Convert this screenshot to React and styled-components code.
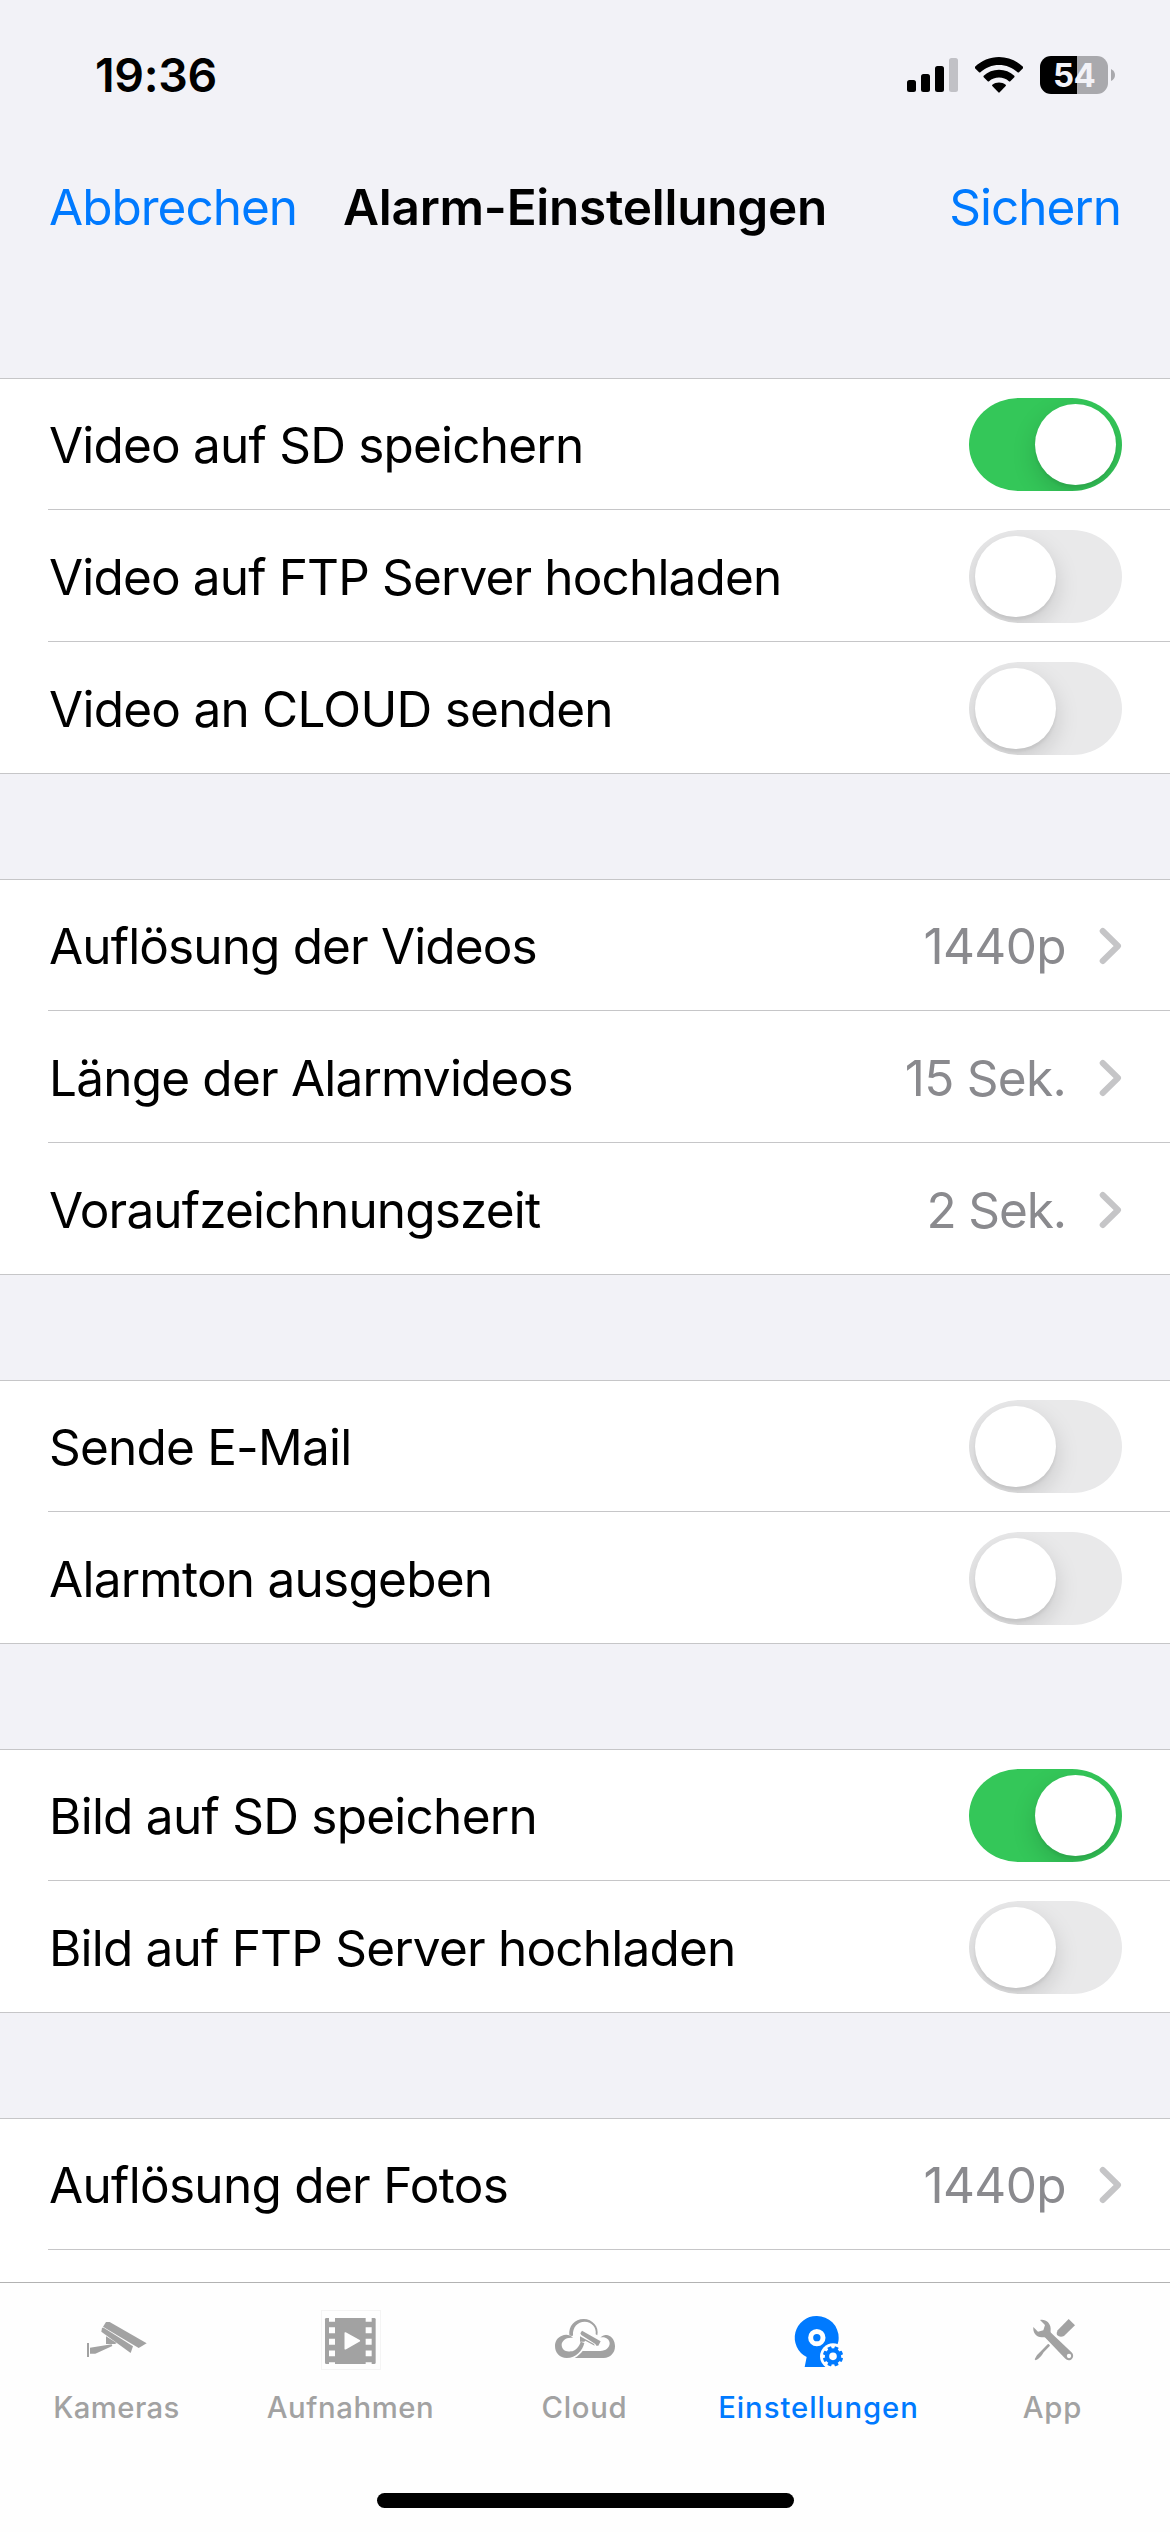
import React from "react";
import styled, { createGlobalStyle } from "styled-components";

const GlobalStyle = createGlobalStyle`
	* {
		box-sizing: border-box;
	}

	body {
		margin: 0;
		background: #f2f2f7;
		font-family: Inter, "Liberation Sans", sans-serif;
		color: #000;
	}
`;

const Screen = styled.div`
	width: 1170px;
	height: 2532px;
	display: flex;
	flex-direction: column;
	overflow: hidden;
	background: #f2f2f7;
`;

// Status bar
const StatusBar = styled.div`
	height: 141px;
	padding: 8px 55px 0 95px;
	display: flex;
	align-items: center;
	justify-content: space-between;
	flex-shrink: 0;
`;

const Clock = styled.div`
	font-size: 46.5px;
	font-weight: 600;
	line-height: 56px;
	letter-spacing: -0.3px;
`;

const StatusIcons = styled.div`
	display: flex;
	align-items: center;
	gap: 17px;
`;

const Battery = styled.div`
	display: flex;
	align-items: center;
	gap: 3px;
`;

const BatteryBody = styled.div`
	width: 68px;
	height: 38px;
	border-radius: 11px;
	background: linear-gradient(to right, #000 37px, #a9a9ad 37px);
	color: #f2f2f7;
	font-size: 33px;
	font-weight: 700;
	line-height: 38px;
	letter-spacing: -0.6px;
	text-align: center;
`;

// Navigation bar
const NavBar = styled.div`
	height: 132px;
	padding: 0 49px;
	display: flex;
	align-items: center;
	flex-shrink: 0;
`;

const NavButton = styled.div`
	width: ${(props) => props.$width}px;
	text-align: ${(props) => props.$align};
	color: #007aff;
	font-size: 49.5px;
	line-height: 60px;
	letter-spacing: -1px;
	white-space: nowrap;
`;

const NavTitle = styled.div`
	flex: 1;
	font-size: 49.5px;
	font-weight: 600;
	line-height: 60px;
	letter-spacing: -0.25px;
	white-space: nowrap;
`;

// Settings list
const List = styled.div`
	flex: 1;
	min-height: 0;
	overflow: hidden;
	padding-top: 105px;
	display: flex;
	flex-direction: column;
	gap: 105px;
`;

const Group = styled.div`
	flex-shrink: 0;
	background: #fff;
	border-top: 1px solid #c6c6c8;
	border-bottom: 1px solid #c6c6c8;
`;

const Row = styled.div`
	height: 132px;
	margin-left: 48px;
	padding: 2px 48px 0 1px;
	display: flex;
	align-items: center;
	border-bottom: 1px solid #c6c6c8;

	&:first-child {
		height: 131px;
		padding-top: 1px;
	}

	&:last-child {
		height: 131px;
		border-bottom: 0;
	}
`;

const Label = styled.div`
	flex: 1;
	font-size: 49.5px;
	line-height: 60px;
	letter-spacing: ${(props) => props.$track}px;
	white-space: nowrap;
`;

const Value = styled.div`
	margin-right: 32px;
	color: #8a8a8e;
	font-size: 49.5px;
	line-height: 60px;
	letter-spacing: ${(props) => props.$track}px;
	white-space: nowrap;
`;

const Track = styled.div`
	width: 153px;
	height: 93px;
	padding: 6px;
	border-radius: 50px / 46.5px;
	display: flex;
	justify-content: ${(props) => (props.$on ? "flex-end" : "flex-start")};
	background: ${(props) => (props.$on ? "#34c759" : "#e9e9ea")};
	overflow: hidden;
`;

const Knob = styled.div`
	width: 81px;
	height: 81px;
	border-radius: 50%;
	background: #fff;
	box-shadow: 0 9px 24px rgba(0, 0, 0, 0.15), 0 3px 3px rgba(0, 0, 0, 0.06);
`;

// Tab bar
const TabBar = styled.div`
	height: 250px;
	display: flex;
	flex-direction: column;
	align-items: center;
	flex-shrink: 0;
	background: #fefefe;
	border-top: 1px solid #b2b2b2;
`;

const Tabs = styled.div`
	width: 100%;
	height: 210px;
	display: grid;
	grid-template-columns: repeat(5, 1fr);
`;

const Tab = styled.div`
	padding: 27px 1px 0 0;
	display: flex;
	flex-direction: column;
	align-items: center;
	color: ${(props) => (props.$active ? "#007aff" : "#a2a2a2")};
`;

const TabLabel = styled.div`
	margin-top: 20px;
	font-size: 29.3px;
	font-weight: 500;
	line-height: 36px;
	letter-spacing: ${(props) => props.$track}px;
	white-space: nowrap;
`;

const HomeIndicator = styled.div`
	width: 417px;
	height: 15px;
	border-radius: 8px;
	background: #000;
`;

function SignalIcon() {
	return (
		<svg width="51" height="34" viewBox="0 0 51 34">
			<rect x="0" y="22" width="9" height="12" rx="2.5" />
			<rect x="14" y="16" width="9" height="18" rx="2.5" />
			<rect x="28" y="8" width="9" height="26" rx="2.5" />
			<rect x="42" y="0" width="9" height="34" rx="2.5" fill="#c1c1c6" />
		</svg>
	);
}

function WifiIcon() {
	return (
		<svg width="48" height="36" viewBox="0 0 48 36">
			<path d="M24 0C33 0 41.600 3.600 48 9.800Q48.600 10.500 48 11.200L44 15.300Q43.300 15.900 42.600 15.300C37.600 10.500 31 7.900 24 7.900S10.400 10.500 5.400 15.300Q4.700 15.900 4 15.300L0 11.200Q-.6 10.500 0 9.800C6.400 3.600 15 0 24 0Z" />
			<path d="M24 12.800C29.800 12.800 35.200 15 39.300 18.800Q39.900 19.500 39.300 20.200L35.300 24.200Q34.600 24.800 33.900 24.200C31.200 21.800 27.700 20.500 24 20.500S16.800 21.800 14.100 24.200Q13.400 24.800 12.700 24.200L8.700 20.200Q8.100 19.500 8.700 18.800C12.800 15 18.200 12.800 24 12.800Z" />
			<path d="M24 25.400C26.500 25.400 28.800 26.200 30.700 27.700Q31.300 28.400 30.700 29.100L24.700 35.300Q24 36 23.300 35.300L17.300 29.100Q16.700 28.400 17.300 27.700C19.200 26.200 21.500 25.400 24 25.400Z" />
		</svg>
	);
}

function BatteryTip() {
	return (
		<svg width="4" height="12" viewBox="0 0 4 12">
			<path d="M0 0Q4 2 4 6T0 12Z" fill="#a9a9ad" />
		</svg>
	);
}

function Chevron() {
	return (
		<svg width="24" height="38" viewBox="0 0 24 38">
			<path
				d="M4.700 4L20 19L4.700 34"
				fill="none"
				stroke="#c5c5c7"
				strokeWidth="6"
				strokeLinecap="round"
				strokeLinejoin="round"
			/>
		</svg>
	);
}

function CameraIcon() {
	return (
		<svg width="60" height="60" viewBox="78 30 180 180" fill="currentColor">
			<path d="M78 129h6v42h-6z" />
			<path d="M87 143L152 133L154 138L103 161H87z" />
			<path d="M135 109L167 129L162 132H135z" />
			<path d="M121 95L123 83H128L216 139L209 159z" />
			<path d="M126 80L135 66H146L257 130L233 144z" />
		</svg>
	);
}

function FilmIcon() {
	const holes = [82, 116.5, 151.5];
	return (
		<svg width="60" height="60" viewBox="60 30 180 180" fill="currentColor">
			<rect x="61.500" y="31.500" width="177" height="177" fill="none" stroke="#f4f4f4" strokeWidth="3" />
			<rect x="72" y="54" width="152" height="138" rx="4" />
			<g fill="#fefefe">
				<path d="M84 53h18v12h-18zM194 53h18v12h-18zM84 187h18v6h-18zM194 187h18v6h-18z" />
				{holes.map((y) => (
					<path key={y} d={`M84 ${y}h18v17.500h-18zM194 ${y}h18v17.500h-18z`} />
				))}
				<path
					d="M133 99V146L175 122.500z"
					stroke="#fefefe"
					strokeWidth="5"
					strokeLinejoin="round"
				/>
			</g>
		</svg>
	);
}

function CloudIcon() {
	return (
		<svg width="60" height="60" viewBox="72 30 180 180" fill="currentColor">
			<path d="M115 106C112 78 131 57 158 57C184 57 205 80 199 106L194 103C197 82 182 65 161 65C140 65 124 82 126 106C125 110 120 108 115 106z" />
			<path d="M126 114C117 103 103 103 93 107C79 112 72 124 72 138C72 158 86 174 107 174C135 174 155 151 160 129L149 125C145 139 134 154 119 154C103 157 93 148 92 136C91 122 108 110 126 114z" />
			<path d="M131 174C141 168 150 160 155 153H208C224 153 236 143 236 130C236 118 222 109 208 113C215 105 223 103 231 106C244 110 252 124 252 139C252 159 238 174 218 174z" />
			<path d="M148 100L153 92L209 124L202 137L196 137L193 132L151 105z" />
			<path d="M147 109L189 132L191 137L163 122L160 125H147z" />
		</svg>
	);
}

function SettingsIcon() {
	const teeth = [22.5, 67.5, 112.5, 157.5, 202.5, 247.5, 292.5, 337.5];
	return (
		<svg width="60" height="60" viewBox="54 30 180 180" fill="currentColor">
			<path d="M138 48A65 65 0 0 1 203 113C203 121 202 127 199 134L163 201H101L107 171A65 65 0 0 1 138 48z" />
			<circle cx="137.500" cy="113" r="18.500" fill="none" stroke="#fefefe" strokeWidth="15" />
			<circle cx="186" cy="169" r="39" fill="#fefefe" />
			<circle cx="186" cy="169" r="18" fill="none" stroke="currentColor" strokeWidth="13" />
			{teeth.map((angle) => (
				<rect
					key={angle}
					x="180"
					y="138.500"
					width="12"
					height="9"
					rx="2"
					transform={`rotate(${angle} 186 169)`}
				/>
			))}
		</svg>
	);
}

function ToolsIcon() {
	return (
		<svg width="60" height="60" viewBox="66 30 180 180" fill="currentColor">
			<path d="M203 57L222 76L189 108Q177 114 168 105Q166 98 170 91z" />
			<path d="M144 133L147 137L128 157Q119 174 104 181L101 178Q107 163 121 152L140 133Q142 131 144 133z" />
			<path d="M117 60C133 56 149 69 149 86C149 92 148 95 150 98L213 158C221 168 214 181 203 181C198 181 194 177 191 174L133 113C130 111 126 112 122 112C106 112 95 98 97 81L111 95L127 91L132 75z" />
			<circle cx="204" cy="168" r="6.500" fill="#fefefe" />
		</svg>
	);
}

function Switch({ on }) {
	return (
		<Track $on={on}>
			<Knob />
		</Track>
	);
}

const groups = [
	[
		{ label: "Video auf SD speichern", track: -0.8, on: true },
		{ label: "Video auf FTP Server hochladen", track: -0.85, on: false },
		{ label: "Video an CLOUD senden", track: -0.75, on: false }
	],
	[
		{ label: "Auflösung der Videos", track: -0.87, value: "1440p", valueTrack: -0.6 },
		{ label: "Länge der Alarmvideos", track: -0.8, value: "15 Sek.", valueTrack: -0.7 },
		{ label: "Voraufzeichnungszeit", track: -0.85, value: "2 Sek.", valueTrack: -1.1 }
	],
	[
		{ label: "Sende E-Mail", track: -0.8, on: false },
		{ label: "Alarmton ausgeben", track: -0.75, on: false }
	],
	[
		{ label: "Bild auf SD speichern", track: -0.75, on: true },
		{ label: "Bild auf FTP Server hochladen", track: -0.8, on: false }
	],
	[
		{ label: "Auflösung der Fotos", track: -0.7, value: "1440p", valueTrack: -0.6 },
		{ label: "" }
	]
];

const tabs = [
	{ label: "Kameras", icon: <CameraIcon />, track: 0.4 },
	{ label: "Aufnahmen", icon: <FilmIcon />, track: 0.6 },
	{ label: "Cloud", icon: <CloudIcon />, track: 0.7 },
	{ label: "Einstellungen", icon: <SettingsIcon />, track: 0.95, active: true },
	{ label: "App", icon: <ToolsIcon />, track: 0.9 }
];

export default function App() {
	return (
		<>
			<GlobalStyle />
			<Screen>
				<StatusBar>
					<Clock>19:36</Clock>
					<StatusIcons>
						<SignalIcon />
						<WifiIcon />
						<Battery>
							<BatteryBody>54</BatteryBody>
							<BatteryTip />
						</Battery>
					</StatusIcons>
				</StatusBar>

				<NavBar>
					<NavButton $width={294} $align="left">
						Abbrechen
					</NavButton>
					<NavTitle>Alarm-Einstellungen</NavTitle>
					<NavButton $width={200} $align="right">
						Sichern
					</NavButton>
				</NavBar>

				<List>
					{groups.map((rows, i) => (
						<Group key={i}>
							{rows.map((row) => (
								<Row key={row.label}>
									<Label $track={row.track ?? 0}>{row.label}</Label>
									{row.on !== undefined && <Switch on={row.on} />}
									{row.value && (
										<>
											<Value $track={row.valueTrack}>{row.value}</Value>
											<Chevron />
										</>
									)}
								</Row>
							))}
						</Group>
					))}
				</List>

				<TabBar>
					<Tabs>
						{tabs.map((tab) => (
							<Tab key={tab.label} $active={tab.active}>
								{tab.icon}
								<TabLabel $track={tab.track}>{tab.label}</TabLabel>
							</Tab>
						))}
					</Tabs>
					<HomeIndicator />
				</TabBar>
			</Screen>
		</>
	);
}
